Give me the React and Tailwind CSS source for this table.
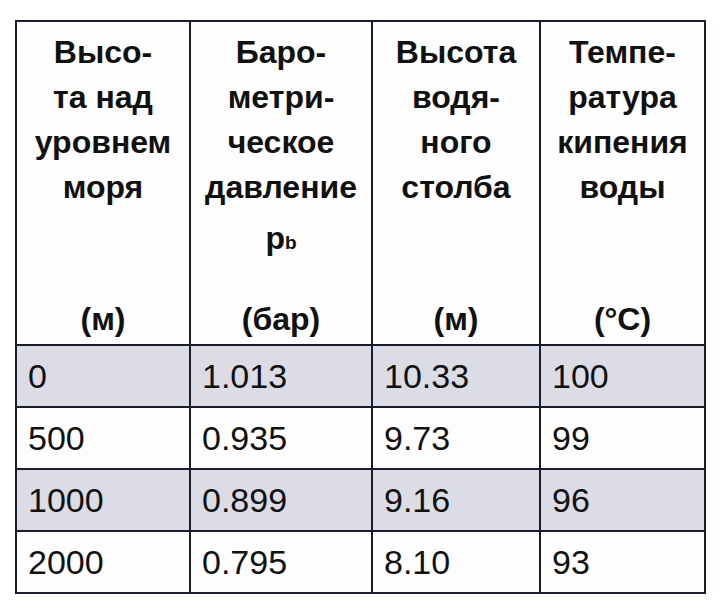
const head = [
  { lines: ["Высо-", "та над", "уровнем", "моря"], unit: "(м)" },
  { lines: ["Баро-", "метри-", "ческое", "давление"], sub: true, unit: "(бар)" },
  { lines: ["Высота", "водя-", "ного", "столба"], unit: "(м)" },
  { lines: ["Темпе-", "ратура", "кипения", "воды"], unit: "(°C)" },
];

const rows = [
  ["0", "1.013", "10.33", "100"],
  ["500", "0.935", "9.73", "99"],
  ["1000", "0.899", "9.16", "96"],
  ["2000", "0.795", "8.10", "93"],
];

export default function App() {
  return (
    <div
      className="w-[720px] h-[608px] bg-white pt-[20px] pl-[15px] text-[#111]"
      style={{ fontFamily: '"Liberation Sans", Arial, sans-serif' }}
    >
      <div className="grid grid-cols-[174px_182px_168px_165px] w-max border-l-2 border-t-2 border-[#1b1d2e]">
        {head.map((h, i) => (
          <div
            key={i}
            className="h-[324px] flex flex-col justify-between items-center pt-[8px] pb-[2px] border-r-2 border-b-2 border-[#1b1d2e] bg-[#fdfdfd] font-bold text-[32px] leading-[45px]"
          >
            <div className="flex flex-col items-center">
              {h.lines.map((l) => (
                <div key={l}>{l}</div>
              ))}
              {h.sub && (
                <div className="mt-[6px]">
                  p<span className="text-[19px]">b</span>
                </div>
              )}
            </div>
            <div>{h.unit}</div>
          </div>
        ))}
        {rows.map((r, ri) =>
          r.map((c, ci) => (
            <div
              key={ri + "-" + ci}
              className={`h-[62px] flex items-center pl-[11px] border-r-2 border-b-2 border-[#1b1d2e] text-[34px] ${
                ri % 2 === 0 ? "bg-[#dcdce6]" : "bg-[#fdfdfd]"
              }`}
            >
              {c}
            </div>
          ))
        )}
      </div>
    </div>
  );
}
